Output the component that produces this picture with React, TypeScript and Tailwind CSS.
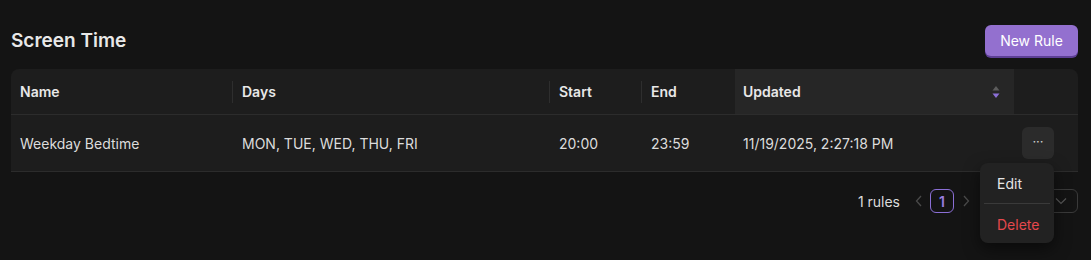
import React from 'react';

const font = { fontFamily: 'Inter, "Noto Sans", sans-serif' };

function SortIcon() {
  return (
    <svg width="8" height="14" viewBox="0 0 8 14" className="shrink-0">
      <path d="M4 1 L7.5 5.5 H0.5 Z" fill="#5c5c5c" />
      <path d="M4 13 L7.5 8.5 H0.5 Z" fill="#8b6fd6" />
    </svg>
  );
}

export default function App() {
  return (
    <div className="w-[1091px] h-[260px] bg-[#141414] text-[#e5e5e5] pl-[11px] pr-[13px] pt-[25px]" style={font}>
      <div className="flex items-center justify-between h-[31px] mb-[13px]">
        <h1 className="text-[19px] font-semibold text-[#e8e8e8] pt-[2px]">Screen Time</h1>
        <button className="h-[31px] w-[93px] rounded-md bg-[#9370cf] text-white text-[14px] shadow-[0_2px_0_#5d3f95]">
          New Rule
        </button>
      </div>

      <div className="rounded-t-lg bg-[#1d1d1d]">
        <div className="flex h-[46px] text-[14px] font-semibold text-[#e8e8e8] border-b border-[#2c2c2c]">
          <div className="w-[222px] flex items-center px-[9px] relative">
            Name
            <span className="absolute right-0 top-[12px] h-[22px] w-px bg-[#2e2e2e]" />
          </div>
          <div className="w-[317px] flex items-center px-[9px] relative">
            Days
            <span className="absolute right-0 top-[12px] h-[22px] w-px bg-[#2e2e2e]" />
          </div>
          <div className="w-[92px] flex items-center px-[9px] relative">
            Start
            <span className="absolute right-0 top-[12px] h-[22px] w-px bg-[#2e2e2e]" />
          </div>
          <div className="w-[93px] flex items-center px-[9px]">End</div>
          <div className="w-[279px] flex items-center justify-between pl-[8px] pr-[14px] bg-[#262626]">
            <span>Updated</span>
            <SortIcon />
          </div>
          <div className="flex-1" />
        </div>
        <div className="flex h-[57px] items-center text-[14px] text-[#dcdcdc] border-b border-[#2c2c2c]">
          <div className="w-[222px] px-[9px]">Weekday Bedtime</div>
          <div className="w-[317px] px-[9px]">MON, TUE, WED, THU, FRI</div>
          <div className="w-[92px] px-[9px]">20:00</div>
          <div className="w-[93px] px-[9px]">23:59</div>
          <div className="w-[279px] px-[8px]">11/19/2025, 2:27:18 PM</div>
          <div className="flex-1 flex justify-start pl-[8px]">
            <div className="relative">
              <button className="w-[32px] h-[32px] rounded-md bg-[#2b2b2b] text-[#cfcfcf] text-[13px] leading-none pb-[4px]">
                ···
              </button>
              <div className="absolute right-0 top-[36px] w-[74px] rounded-lg bg-[#222222] shadow-[0_6px_16px_rgba(0,0,0,0.5)] px-[4px] pt-[4px] pb-[3px] z-10 text-[14px]">
                <div className="h-[32px] flex items-center px-[13px] text-[#e6e6e6]">Edit</div>
                <div className="h-px bg-[#3a3a3a] my-[4px]" />
                <div className="h-[32px] flex items-center px-[13px] text-[#e5484d]">Delete</div>
              </div>
            </div>
          </div>
        </div>
      </div>

      <div className="flex items-center justify-end mt-[17px] h-[24px] text-[14px]">
        <span className="text-[#dcdcdc] mr-[15px]">1 rules</span>
        <svg width="8" height="12" viewBox="0 0 8 12" className="mr-[7px]">
          <path d="M6 1 L1.5 6 L6 11" stroke="#4a4a4a" strokeWidth="1.3" fill="none" />
        </svg>
        <div className="w-[24px] h-[24px] rounded-md border border-[#8b6fd6] text-[#9a7ee0] font-semibold flex items-center justify-center">
          1
        </div>
        <svg width="8" height="12" viewBox="0 0 8 12" className="ml-[8px] mr-[23px]">
          <path d="M2 1 L6.5 6 L2 11" stroke="#4a4a4a" strokeWidth="1.3" fill="none" />
        </svg>
        <div className="w-[85px] h-[24px] rounded-md border border-[#3a3a3a] flex items-center justify-end pr-[10px]">
          <svg width="12" height="8" viewBox="0 0 12 8">
            <path d="M1 1.5 L6 6.5 L11 1.5" stroke="#555" strokeWidth="1.2" fill="none" />
          </svg>
        </div>
      </div>
    </div>
  );
}
